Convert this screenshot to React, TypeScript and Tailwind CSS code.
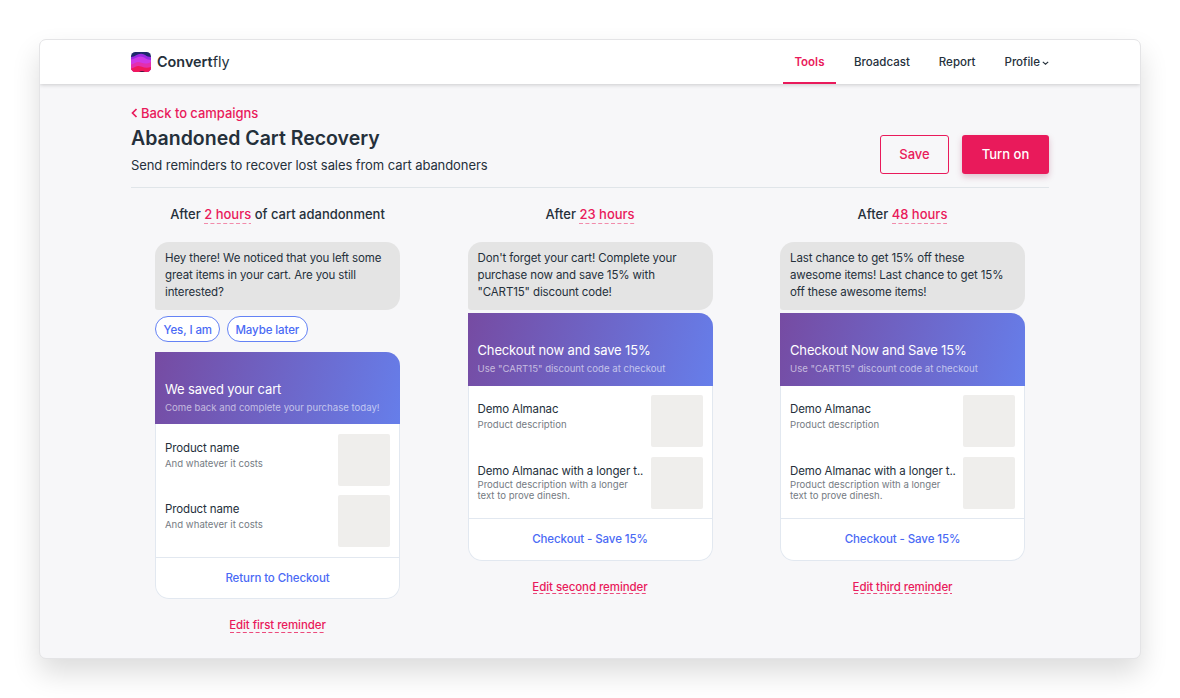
import React from "react";

type Product = { name: string; text: string; long?: boolean };
type Reminder = {
  delay: string;
  suffix?: string;
  message: string[];
  replies: string[];
  title: string;
  subtitle: string;
  products: Product[];
  action: string;
  edit: string;
};

const almanac: Product[] = [
  { name: "Demo Almanac", text: "Product description" },
  { name: "Demo Almanac with a longer t..", text: "Product description with a longer text to prove dinesh.", long: true },
];

const reminders: Reminder[] = [
  {
    delay: "2 hours",
    suffix: " of cart adandonment",
    message: ["Hey there! We noticed that you left some", "great items in your cart. Are you still", "interested?"],
    replies: ["Yes, I am", "Maybe later"],
    title: "We saved your cart",
    subtitle: "Come back and complete your purchase today!",
    products: [
      { name: "Product name", text: "And whatever it costs" },
      { name: "Product name", text: "And whatever it costs" },
    ],
    action: "Return to Checkout",
    edit: "Edit first reminder",
  },
  {
    delay: "23 hours",
    message: ["Don't forget your cart! Complete your", "purchase now and save 15% with", "\"CART15\" discount code!"],
    replies: [],
    title: "Checkout now and save 15%",
    subtitle: "Use \"CART15\" discount code at checkout",
    products: almanac,
    action: "Checkout - Save 15%",
    edit: "Edit second reminder",
  },
  {
    delay: "48 hours",
    message: ["Last chance to get 15% off these", "awesome items! Last chance to get 15%", "off these awesome items!"],
    replies: [],
    title: "Checkout Now and Save 15%",
    subtitle: "Use \"CART15\" discount code at checkout",
    products: almanac,
    action: "Checkout - Save 15%",
    edit: "Edit third reminder",
  },
];

function Logo() {
  return (
    <svg className="h-5 w-5" viewBox="0 0 20 20" aria-hidden="true">
      <defs>
        <clipPath id="logo-clip"><rect width="20" height="20" rx="4.500" /></clipPath>
      </defs>
      <g clipPath="url(#logo-clip)">
        <rect width="20" height="20" fill="#1e2a6b" />
        <path d="M0 5C4 5 6 1.800 10 1.800S15 5 20 5v15H0z" fill="#9a2be2" />
        <path d="M0 7.500C3 7.500 6 4.500 9.500 4.500s6 3.500 10.500 3.500v12H0z" fill="#cf38e6" />
        <path d="M0 12.500c3 0 4-2.500 7-2.500s7 3.500 13 0v10H0z" fill="#e32fae" />
        <path d="M0 16.500c3 0 4-2.500 7-2.500s7 3 13 1v5H0z" fill="#f0185c" />
        <path d="M8 20c2-1.500 4-1.500 6 0z" fill="#3b1440" />
      </g>
    </svg>
  );
}

function Header() {
  return (
    <header className="relative flex h-[44px] shrink-0 items-center justify-between bg-white pr-[79px] pl-[91px] shadow-[0_1px_4px_rgba(0,0,0,0.18)]">
      <div className="flex items-center gap-1.5">
        <Logo />
        <span className="text-[14.400px] leading-5 text-[#25303b]"><span className="font-semibold">Convert</span>fly</span>
      </div>
      <nav className="flex h-full text-[11.500px] font-medium text-[#25303b]">
        <a className="flex h-full items-center border-b-2 border-[#e91a5b] px-[11.500px] pt-[3px] font-semibold text-[#e91a5b]">Tools</a>
        <a className="ml-1.5 flex items-center px-3 pt-px">Broadcast</a>
        <a className="ml-[5px] flex items-center px-3 pt-px">Report</a>
        <a className="ml-[5px] flex items-center gap-[2px] px-3 pt-px">
          Profile
          <svg className="h-1.5 w-[7px]" viewBox="0 0 7 6" fill="none" stroke="#25303b" strokeWidth="1.100"><path d="M0.800 1.800 3.500 4.200 6.200 1.800" /></svg>
        </a>
      </nav>
    </header>
  );
}

function ReminderColumn({ item }: { item: Reminder }) {
  return (
    <section className="flex w-[245px] flex-col items-center">
      <h2 className="text-[13px] leading-5 font-medium whitespace-nowrap text-[#25303b]">
        After{" "}
        <span className="relative text-[#e91a5b]">
          {item.delay}
          <svg className="absolute inset-x-0 -bottom-[2px] h-[1.500px] w-full" aria-hidden="true">
            <line x1="0" y1="0.75" x2="100%" y2="0.75" stroke="#f28bab" strokeWidth="1.500" strokeDasharray="4 2.400" />
          </svg>
        </span>
        {item.suffix}
      </h2>
      <div className="mt-[17.500px] h-[68px] w-full rounded-[14px] rounded-bl-[3px] bg-[#e4e4e4] px-2.5 py-2 text-[11.500px] leading-[17px] tracking-[-0.12px] whitespace-nowrap text-[#25303b]">
        {item.message.map((line) => <p key={line}>{line}</p>)}
      </div>
      {item.replies.length > 0 && (
        <div className="mt-[6.500px] mb-[6px] flex w-full gap-[6.500px]">
          {item.replies.map((r) => (
            <button key={r} className="h-[26px] rounded-full border border-[#6482f5] bg-white px-[7.500px] pt-px text-[11.500px] leading-4 font-medium tracking-[-0.1px] whitespace-nowrap text-[#4a6af5]">{r}</button>
          ))}
        </div>
      )}
      <article className="mt-[3.500px] w-full overflow-hidden rounded-[14px] rounded-tl-none bg-white shadow-[inset_0_0_0_1px_#e2e8f0]">
        <div className="h-[72.500px] bg-[linear-gradient(105deg,#764ba2_0%,#667eea_100%)] px-2.5 pt-7">
          <h3 className="text-[13px] leading-[19px] tracking-[-0.15px] whitespace-nowrap text-white">{item.title}</h3>
          <p className="text-[9.600px] leading-[17px] whitespace-nowrap text-white/60">{item.subtitle}</p>
        </div>
        <div className="flex flex-col gap-[9.500px] px-2.5 py-[9.500px]">
          {item.products.map((p, i) => (
            <div key={i} className="flex h-[52px] justify-between">
              <div className="w-[170px] pt-[6px]">
                <h4 className="text-[11.500px] leading-[17px] tracking-[-0.12px] whitespace-nowrap text-[#25303b]">{p.name}</h4>
                <p className={p.long ? "-mt-px text-[9.600px] leading-[11.500px] text-[#757b83]" : "-mt-px text-[9.600px] leading-[15px] text-[#757b83]"}>{p.text}</p>
              </div>
              <div className="h-[52px] w-[52px] shrink-0 rounded-[2px] bg-[#efeeec]" />
            </div>
          ))}
        </div>
        <div className="flex h-[42.500px] items-center justify-center border-t border-[#e2e8f0] text-[11.500px] font-medium tracking-[-0.1px] text-[#4a6af5]">{item.action}</div>
      </article>
      <a className="relative mt-[18px] text-[11.500px] leading-[17px] font-medium tracking-[-0.08px] text-[#e91a5b]">
        {item.edit}
        <svg className="absolute inset-x-0 bottom-[1.500px] h-px w-full" aria-hidden="true">
          <line x1="1" y1="0.5" x2="100%" y2="0.5" stroke="#ec4a7c" strokeWidth="1" strokeDasharray="4 2.400" />
        </svg>
      </a>
    </section>
  );
}

export default function App() {
  return (
    <div className="flex h-[698px] w-[1180px] bg-white px-[39px] pt-[39px] pb-[39px] font-['Inter',sans-serif]">
      <div className="flex w-full flex-col overflow-hidden rounded-[7px] border border-[#e4e4e6] bg-[#f7f7f9] shadow-[0_14px_28px_rgba(0,0,0,0.14)]">
        <Header />
        <main className="mx-[91px] flex-1 pt-[19px]">
          <div className="flex items-end justify-between border-b border-[#e0e5e9] pb-[13px]">
            <div className="-mb-[3px]">
              <a className="flex items-center gap-[3px] text-[13px] leading-5 font-medium tracking-[-0.05px] text-[#e91a5b]">
                <svg className="h-[10px] w-[7px]" viewBox="0 0 7 10" fill="none" stroke="currentColor" strokeWidth="1.700"><path d="M5.500 1 1.500 5l4 4" /></svg>
                Back to campaigns
              </a>
              <h1 className="text-[19.500px] leading-[30px] font-semibold text-[#25303b]">Abandoned Cart Recovery</h1>
              <p className="text-[13px] leading-6 tracking-[-0.08px] text-[#25303b]">Send reminders to recover lost sales from cart abandoners</p>
            </div>
            <div className="flex gap-[13px] text-[13px] font-medium">
              <button className="h-[39px] w-[69px] rounded-[3px] border border-[#e91a5b] pt-px text-[#e91a5b]">Save</button>
              <button className="h-[39px] w-[87px] rounded-[3px] bg-[#e91a5b] pt-px text-white shadow-[0_3px_6px_rgba(150,30,80,0.25)]">Turn on</button>
            </div>
          </div>
          <div className="flex items-start justify-between px-6 pt-[16px]">
            {reminders.map((item) => <ReminderColumn key={item.edit} item={item} />)}
          </div>
        </main>
      </div>
    </div>
  );
}
